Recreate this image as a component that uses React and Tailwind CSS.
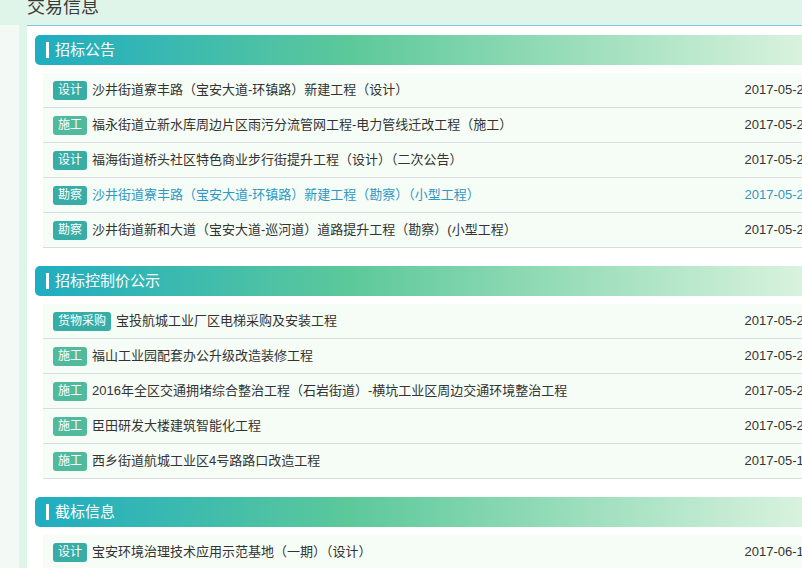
import React from "react";

const sections = [
  {
    title: "招标公告",
    rows: [
      { tag: "设计", text: "沙井街道寮丰路（宝安大道-环镇路）新建工程（设计）", date: "2017-05-23" },
      { tag: "施工", text: "福永街道立新水库周边片区雨污分流管网工程-电力管线迁改工程（施工）", date: "2017-05-23" },
      { tag: "设计", text: "福海街道桥头社区特色商业步行街提升工程（设计）（二次公告）", date: "2017-05-23" },
      { tag: "勘察", text: "沙井街道寮丰路（宝安大道-环镇路）新建工程（勘察）（小型工程）", date: "2017-05-23", active: true },
      { tag: "勘察", text: "沙井街道新和大道（宝安大道-巡河道）道路提升工程（勘察）(小型工程）", date: "2017-05-23" },
    ],
  },
  {
    title: "招标控制价公示",
    rows: [
      { tag: "货物采购", text: "宝投航城工业厂区电梯采购及安装工程", date: "2017-05-22" },
      { tag: "施工", text: "福山工业园配套办公升级改造装修工程", date: "2017-05-22" },
      { tag: "施工", text: "2016年全区交通拥堵综合整治工程（石岩街道）-横坑工业区周边交通环境整治工程", date: "2017-05-22" },
      { tag: "施工", text: "臣田研发大楼建筑智能化工程", date: "2017-05-22" },
      { tag: "施工", text: "西乡街道航城工业区4号路路口改造工程", date: "2017-05-19" },
    ],
  },
  {
    title: "截标信息",
    rows: [
      { tag: "设计", text: "宝安环境治理技术应用示范基地（一期）（设计）", date: "2017-06-13" },
      { tag: "施工", text: "宝安区公共文化设施提升改造工程（施工）", date: "2017-06-13" },
    ],
  },
];

const Tag = ({ label }) => (
  <span
    className={
      "inline-block h-[19px] px-[5px] rounded-[3px] text-[12px] leading-[19px] text-white " +
      (label === "施工" ? "bg-[#52ba9c]" : "bg-[#37ada6]")
    }
  >
    {label}
  </span>
);

export default function App() {
  return (
    <div
      className="w-[802px] h-[568px] overflow-hidden bg-[#e0f5e9]"
      style={{ fontFamily: '"Liberation Sans", "Noto Sans CJK SC", sans-serif' }}
    >
      <div className="w-[850px]">
        {/* Page title */}
        <div className="h-[25px] pl-[27px] flex items-start">
          <h1 className="text-[18px] leading-[18px] mt-[-2px] text-[#3a3a3a] font-normal">
            交易信息
          </h1>
        </div>

        <div className="flex">
          <div className="w-[19px] bg-[#f3faf6]"></div>
          <div className="w-[8px]"></div>

          {/* White panel */}
          <div className="w-[810px] bg-white border-t border-[#7ec3e6] px-[8px] pt-[9px] pb-[20px]">
            {sections.map((section) => (
              <div key={section.title} className="mb-[18px]">
                {/* Section header */}
                <div className="h-[30px] flex items-center pl-[11px] rounded-l-[5px] bg-[linear-gradient(to_right,#1fadc1,#5dc99a_40%,#e0f5e1)]">
                  <span className="w-[3px] h-[16px] bg-white"></span>
                  <span className="ml-[6px] text-[15px] text-white">{section.title}</span>
                </div>

                {/* Rows */}
                <div className="mx-[8px] mt-[8px]">
                  {section.rows.map((row, i) => (
                    <div
                      key={i}
                      className="h-[35px] flex items-center justify-between bg-[#f6fdf6] border-b border-[#dcdcdc] pl-[10px] pr-[10px]"
                    >
                      <div className="flex items-center">
                        <Tag label={row.tag} />
                        <span
                          className={
                            "ml-[5px] text-[13px] " +
                            (row.active ? "text-[#2e98c6]" : "text-[#333333]")
                          }
                        >
                          {row.text}
                        </span>
                      </div>
                      <span
                        className={
                          "text-[13px] " + (row.active ? "text-[#2e98c6]" : "text-[#333333]")
                        }
                      >
                        {row.date}
                      </span>
                    </div>
                  ))}
                </div>
              </div>
            ))}
          </div>
        </div>
      </div>
    </div>
  );
}
